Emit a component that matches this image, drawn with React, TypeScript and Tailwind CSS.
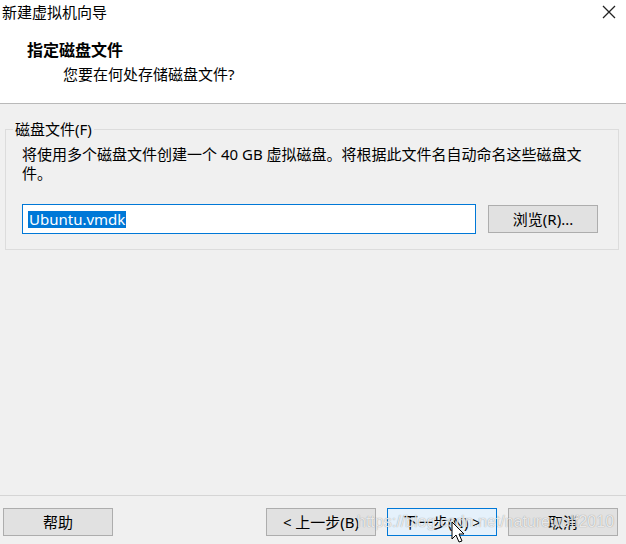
const font = "font-['Noto_Sans','Noto_Sans_CJK_SC',sans-serif]";

const WizardButton = ({
  label,
  focused = false,
}: {
  label: string;
  focused?: boolean;
}) => (
  <button
    className={`w-[110px] h-[28px] border text-[15px] leading-none text-black ${
      focused
        ? "border-[#0078d7] bg-[#e5f1fb]"
        : "border-[#adadad] bg-[#e1e1e1]"
    }`}
  >
    {label}
  </button>
);

const App = () => {
  return (
    <div
      className={`${font} w-[626px] h-[544px] flex flex-col bg-[#f0f0f0] text-black relative overflow-hidden`}
    >
      {/* title + header */}
      <div className="h-[104px] bg-white border-b border-[#b9b9b9] flex flex-col">
        <div className="h-[24px] flex items-center justify-between pl-[2px] pr-[10px]">
          <span className="text-[15px] leading-[24px]">新建虚拟机向导</span>
          <svg width="14" height="14" viewBox="0 0 14 14" className="mt-[-1px]">
            <path d="M1 1 L13 13 M13 1 L1 13" stroke="#222" strokeWidth="1.3" />
          </svg>
        </div>
        <div className="pt-[15px] flex flex-col gap-[2px]">
          <span className="pl-[27px] text-[16px] font-bold leading-[22px]">
            指定磁盘文件
          </span>
          <span className="pl-[63px] text-[15px] leading-[22px]">
            您要在何处存储磁盘文件?
          </span>
        </div>
      </div>

      {/* body */}
      <div className="flex-1 pt-[15px] px-[5px]">
        <fieldset className="w-[612px] border border-[#dcdcdc] pl-[16px] pr-[20px] pb-[15px]">
          <legend className="-ml-[9px] px-[2px] text-[15px] leading-[20px]">
            磁盘文件(F)
          </legend>
          <p className="pt-[6px] text-[15px] leading-[19px]">
            将使用多个磁盘文件创建一个 40 GB 虚拟磁盘。将根据此文件名自动命名这些磁盘文
            <br />
            件。
          </p>
          <div className="mt-[21px] flex items-center gap-[12px]">
            <div className="w-[454px] h-[30px] border border-[#0078d7] bg-white flex items-center pl-[5px]">
              <span className="bg-[#0078d7] text-white text-[15px] leading-[17px] px-[1px]">
                Ubuntu.vmdk
              </span>
            </div>
            <WizardButton label="浏览(R)..." />
          </div>
        </fieldset>
      </div>

      {/* footer */}
      <div className="h-[49px] border-t border-[#d5d5d5] flex justify-between items-start pt-[12px] pl-[3px] pr-[8px]">
        <WizardButton label="帮助" />
        <div className="flex gap-[11px]">
          <WizardButton label="< 上一步(B)" />
          <WizardButton label="下一步(N) >" focused />
          <WizardButton label="取消" />
        </div>
      </div>

      {/* watermark */}
      <span className="absolute left-[357px] top-[511px] font-['Liberation_Sans',sans-serif] text-[16px] leading-[22px] text-white/80 [text-shadow:0_0_1px_rgba(0,0,0,0.45)] pointer-events-none">
        https://blog.csdn.net/naturewolf2010
      </span>

      {/* mouse cursor */}
      <svg
        className="absolute left-[451px] top-[521px]"
        width="16"
        height="24"
        viewBox="0 0 16 24"
      >
        <path
          d="M1 1 L1 18 L5 14 L8 21 L11 20 L8 13 L13 13 Z"
          fill="white"
          stroke="black"
          strokeWidth="1"
          strokeLinejoin="round"
        />
      </svg>
    </div>
  );
};

export default App;
